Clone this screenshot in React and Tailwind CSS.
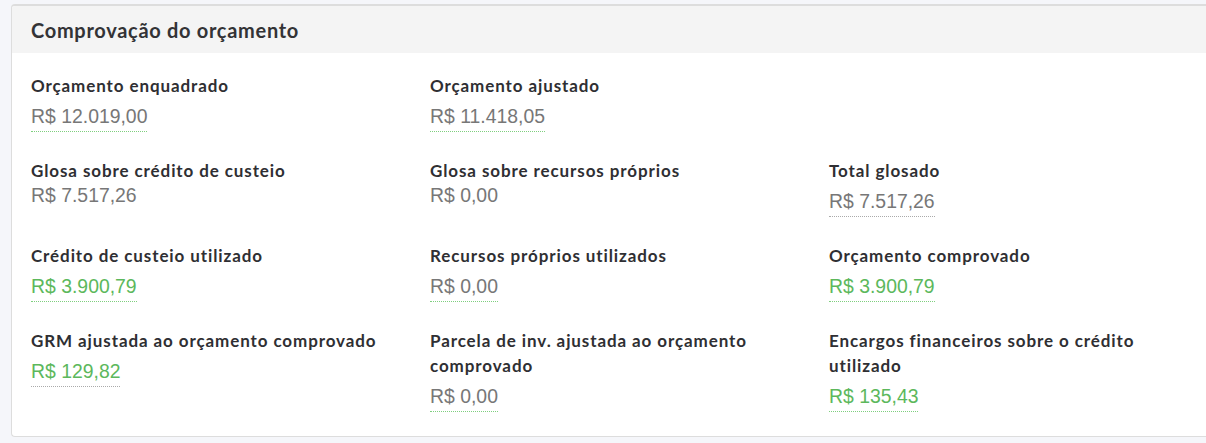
import React from 'react';

const items = [
  { label: 'Orçamento enquadrado', value: 'R$ 12.019,00', tone: 'grey', line: 'green' },
  { label: 'Orçamento ajustado', value: 'R$ 11.418,05', tone: 'grey', line: 'green' },
  null,
  { label: 'Glosa sobre crédito de custeio', value: 'R$ 7.517,26', tone: 'grey' },
  { label: 'Glosa sobre recursos próprios', value: 'R$ 0,00', tone: 'grey' },
  { label: 'Total glosado', value: 'R$ 7.517,26', tone: 'grey', line: 'grey' },
  { label: 'Crédito de custeio utilizado', value: 'R$ 3.900,79', tone: 'green', line: 'green' },
  { label: 'Recursos próprios utilizados', value: 'R$ 0,00', tone: 'grey', line: 'green' },
  { label: 'Orçamento comprovado', value: 'R$ 3.900,79', tone: 'green', line: 'green' },
  { label: 'GRM ajustada ao orçamento comprovado', value: 'R$ 129,82', tone: 'green', line: 'grey' },
  { label: 'Parcela de inv. ajustada ao orçamento comprovado', value: 'R$ 0,00', tone: 'grey', line: 'green' },
  { label: 'Encargos financeiros sobre o crédito utilizado', value: 'R$ 135,43', tone: 'green', line: 'green' },
];

function Field({ item }) {
  if (!item) return <div />;
  const color = item.tone === 'green' ? 'text-[#5cb85c]' : 'text-[#777777]';
  let valueClass = 'block';
  if (item.line === 'green') valueClass = 'inline-block mt-[6px] pb-[2px] border-b border-dotted border-[#7fcf7f]';
  if (item.line === 'grey') valueClass = 'inline-block mt-[6px] pb-[2px] border-b border-dotted border-[#aaaaaa]';

  return (
    <div className="flex flex-col items-start pr-10">
      <div className="font-['Lato',sans-serif] font-bold text-[17px] leading-[25px] tracking-[0.9px] text-[#2f2f33]">
        {item.label}
      </div>
      <span className={`${valueClass} ${color} font-['Liberation_Sans',Arial,sans-serif] text-[19.4px] leading-[25px]`}>
        {item.value}
      </span>
    </div>
  );
}

export default function App() {
  return (
    <div className="min-h-[443px] bg-[#f5f6fa] pt-[4px] pl-[11px]">
      <div className="bg-white border-t-2 border-l border-b border-[#dddddd] rounded-l-[4px] overflow-hidden">
        <div className="bg-[#f4f4f4] h-[47px] pl-[19px] flex items-center">
          <h2 className="font-['Lato',sans-serif] font-bold text-[20px] tracking-[0.7px] text-[#333336]">
            Comprovação do orçamento
          </h2>
        </div>
        <div className="grid grid-cols-[399px_399px_1fr] gap-y-[26px] pt-[20px] pb-[24px] pl-[19px]">
          {items.map((item, i) => (
            <Field key={i} item={item} />
          ))}
        </div>
      </div>
    </div>
  );
}
